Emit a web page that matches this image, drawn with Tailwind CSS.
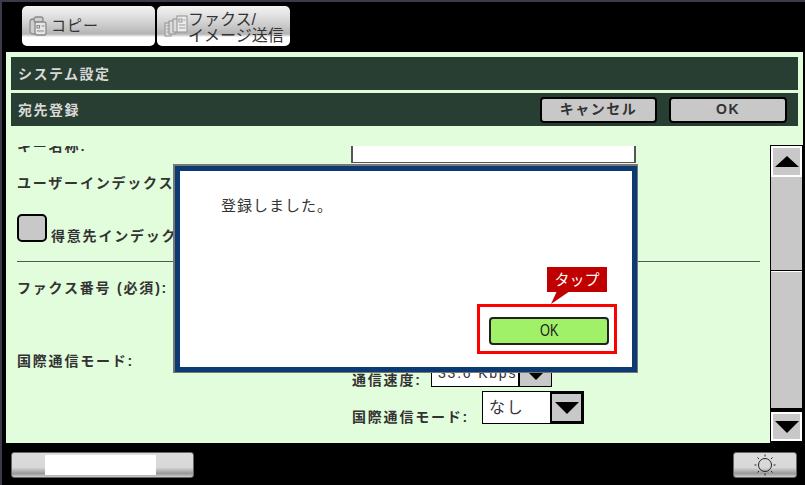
<!DOCTYPE html>
<html lang="ja">
<head>
<meta charset="UTF-8">
<title>宛先登録</title>
<script src="https://cdn.jsdelivr.net/npm/@tailwindcss/browser@4"></script>
</head>
<body class="bg-black">
<div class="relative w-[805px] h-[485px] bg-black overflow-hidden font-['Liberation_Sans','Noto_Sans_CJK_JP',sans-serif] border-t-2 border-l-2 border-[#3a3a4a]">

  <!-- tabs -->
  <div class="flex gap-[2px] pl-[20px] pt-[4px] h-[50px]">
    <div class="w-[133px] h-[40px] rounded-[5px] bg-[linear-gradient(#f4f4f4,#d8d8d8_35%,#b4b4b4_70%,#ffffff_78%)] flex items-center pl-[7px] gap-[4px] text-[15px] text-[#333]">
      <svg width="18" height="20" viewBox="0 0 18 20" fill="none" stroke="#8a8a8a" stroke-width="1.3">
        <rect x="1" y="3" width="11" height="15" rx="3" fill="#cfcfcf"/>
        <rect x="5" y="1" width="9" height="5" rx="2" fill="#cfcfcf"/>
        <rect x="6" y="6" width="11" height="13" rx="2" fill="#e6e6e6"/>
        <path d="M8 9.5h2.5v2.5H8zM12.5 10h3M8 15h7" stroke-width="1.1"/>
      </svg>
      <span class="tracking-[1px] mt-[1px]">コピー</span>
    </div>
    <div class="w-[133px] h-[40px] rounded-[5px] bg-[linear-gradient(#f4f4f4,#d8d8d8_35%,#b4b4b4_70%,#ffffff_78%)] flex items-center pl-[7px] gap-[0px] text-[#333]">
      <svg width="24" height="22" viewBox="0 0 24 22" fill="none" stroke="#999" stroke-width="1.1">
        <rect x="1" y="8" width="6" height="13" fill="#dcdcdc"/>
        <rect x="5" y="6" width="6" height="13" fill="#dcdcdc"/>
        <rect x="9" y="4" width="6" height="13" fill="#dcdcdc"/>
        <rect x="13" y="1" width="10" height="16" fill="#ececec"/>
        <path d="M15 4h3v3h-3zM19.5 5h2M15 10h6.5M15 13h6.5M2.5 11h3M2.5 14h3M2.5 17h3"/>
      </svg>
      <div class="text-[16px] leading-[16px] mt-[3px] whitespace-nowrap">ファクス/<br>イメージ送信</div>
    </div>
  </div>

  <!-- main panel -->
  <div class="relative ml-[4px] w-[797px] h-[391px] bg-[#e2fddc] pt-[5px] pl-[5px]">
    <div class="w-[787px] h-[33px] bg-[#283e32] flex items-center pl-[7px] pt-[2px] text-[14px] font-bold tracking-[1.5px] text-[#d8d8d8]">システム設定</div>
    <div class="w-[787px] h-[33px] mt-[3px] bg-[#283e32] flex items-center pl-[7px] pr-[11px] text-[14px] font-bold tracking-[1.5px] text-[#d8d8d8]">
      <span class="pt-[2px]">宛先登録</span>
      <div class="ml-auto flex gap-[12px]">
        <div class="w-[117px] h-[26px] rounded-[4px] border-2 border-black bg-[#c8c8c8] text-[#333] flex items-center justify-center">キャンセル</div>
        <div class="w-[118px] h-[26px] rounded-[4px] border-2 border-black bg-[#c8c8c8] text-[#333] flex items-center justify-center">OK</div>
      </div>
    </div>

    <!-- form, scrolled so the first row is cut off -->
    <div class="w-[759px] h-[297px] mt-[20px] overflow-hidden text-[14px] font-bold text-[#333] tracking-[1.8px]">
      <div class="-mt-[10px] pl-[6px] h-[26px] flex">
        <span class="w-[334px] leading-[20px]">キー名称:</span>
        <div class="w-[285px] h-[27px] bg-white border-l-2 border-r-2 border-b border-[#555]"></div>
      </div>
      <div class="pl-[6px] mt-[11px] h-[20px] leading-[20px]">ユーザーインデックス</div>
      <div class="pl-[6px] mt-[21px] flex items-end gap-[4px]">
        <div class="w-[30px] h-[28px] rounded-[5px] border-2 border-black bg-[#c8c8c8]"></div>
        <span class="leading-[20px] -mb-[4px]">得意先インデックス</span>
      </div>
      <div class="ml-[6px] w-[743px] h-px bg-[#555] mt-[19px]"></div>
      <div class="pl-[6px] mt-[16px] h-[20px] leading-[20px]">ファクス番号 (必須):</div>

      <div class="flex mt-[27px]">
        <div class="pl-[6px] w-[341px] pt-[26px] leading-[20px]">国際通信モード:</div>
        <div class="flex flex-col">
          <div class="flex items-end h-[62px]">
            <span class="w-[79px] leading-[20px] -mb-[3px]">通信速度:</span>
            <div class="w-[121px] h-[26px] border border-black bg-white flex font-normal">
              <span class="flex-1 pl-[6px] leading-[22px] whitespace-nowrap">33.6 Kbps</span>
              <div class="w-[33px] bg-[#c8c8c8] border-l-2 border-black flex items-center justify-center">
                <div class="w-0 h-0 border-x-[12px] border-x-transparent border-t-[12px] border-t-black"></div>
              </div>
            </div>
          </div>
          <div class="flex items-end mt-[4px]">
            <span class="w-[130px] leading-[20px] -mb-[3px]">国際通信モード:</span>
            <div class="w-[102px] h-[33px] border border-black bg-white flex font-normal">
              <span class="flex-1 pl-[6px] leading-[31px] text-[16px]">なし</span>
              <div class="w-[33px] bg-[#c8c8c8] border-2 border-black flex items-center justify-center">
                <div class="w-0 h-0 border-x-[12px] border-x-transparent border-t-[12px] border-t-black"></div>
              </div>
            </div>
          </div>
        </div>
      </div>
    </div>

    <!-- scrollbar -->
    <div class="absolute left-[764px] top-[93px] w-[33px] h-[298px] bg-black flex flex-col items-center pt-[1px]">
      <div class="w-[31px] h-[31px] bg-[#c8c8c8] border-2 border-white flex items-center justify-center">
        <div class="w-0 h-0 border-x-[12px] border-x-transparent border-b-[11px] border-b-black"></div>
      </div>
      <div class="w-[31px] h-[93px] bg-[#c8c8c8]"></div>
      <div class="w-[31px] h-[137px] mt-[1px] bg-[#c8c8c8] border-t border-white"></div>
      <div class="w-[31px] h-[29px] mt-[4px] bg-[#c8c8c8] border-2 border-white flex items-center justify-center">
        <div class="w-0 h-0 border-x-[12px] border-x-transparent border-t-[12px] border-t-black"></div>
      </div>
    </div>
  </div>

  <!-- bottom bar -->
  <div class="flex items-center justify-between pl-[9px] pr-[8px] mt-[9px]">
    <div class="w-[183px] h-[26px] rounded-[3px] border border-[#666] bg-[linear-gradient(#dcdcdc,#d8d8d8_60%,#999_85%,#ccc)] flex items-center pl-[33px]">
      <div class="w-[111px] h-[20px] bg-white"></div>
    </div>
    <div class="w-[64px] h-[26px] rounded-[3px] border border-[#666] bg-[linear-gradient(#dcdcdc,#d8d8d8_60%,#999_85%,#ccc)] flex items-center justify-center">
      <svg width="22" height="22" viewBox="0 0 22 22" fill="none" stroke="#222" stroke-width="1">
        <circle cx="11" cy="11" r="6.5"/>
        <path d="M11 0.5v2M11 19.5v2M0.5 11h2M19.5 11h2M3.5 3.5l1.5 1.5M17 17l1.5 1.5M3.5 18.5L5 17M17 5l1.5-1.5"/>
      </svg>
    </div>
  </div>

  <!-- dialog -->
  <div class="absolute left-[171px] top-[162px] w-[465px] h-[209px] bg-[#0c3a73] border-t-[2px] border-l-[2px] border-r-[1px] border-b-[1px] border-[#777] p-[5px]">
    <div class="w-full h-full bg-white pl-[41px] pt-[25px] text-[15px] text-[#333] tracking-[1px] leading-[20px]">登録しました。</div>
  </div>

  <!-- tap annotation -->
  <div class="absolute left-[545px] top-[265px] w-[60px] h-[25px] bg-[#c00000] text-white text-[15px] leading-[25px] text-center">タップ</div>
  <svg class="absolute left-[548px] top-[289px]" width="24" height="14" viewBox="0 0 24 14"><path d="M7 0L1 13L20 0Z" fill="#c00000"/></svg>
  <div class="absolute left-[475px] top-[302px] w-[140px] h-[50px] border-[3px] border-[#fe0000] flex items-center justify-center">
    <div class="w-[120px] h-[28px] ml-[4px] mt-[4px] rounded-[4px] border-2 border-[#222] bg-[#a0f068] text-[#222] flex items-center justify-center"><span class="text-[17px] scale-x-75">OK</span></div>
  </div>
</div>
</body>
</html>
